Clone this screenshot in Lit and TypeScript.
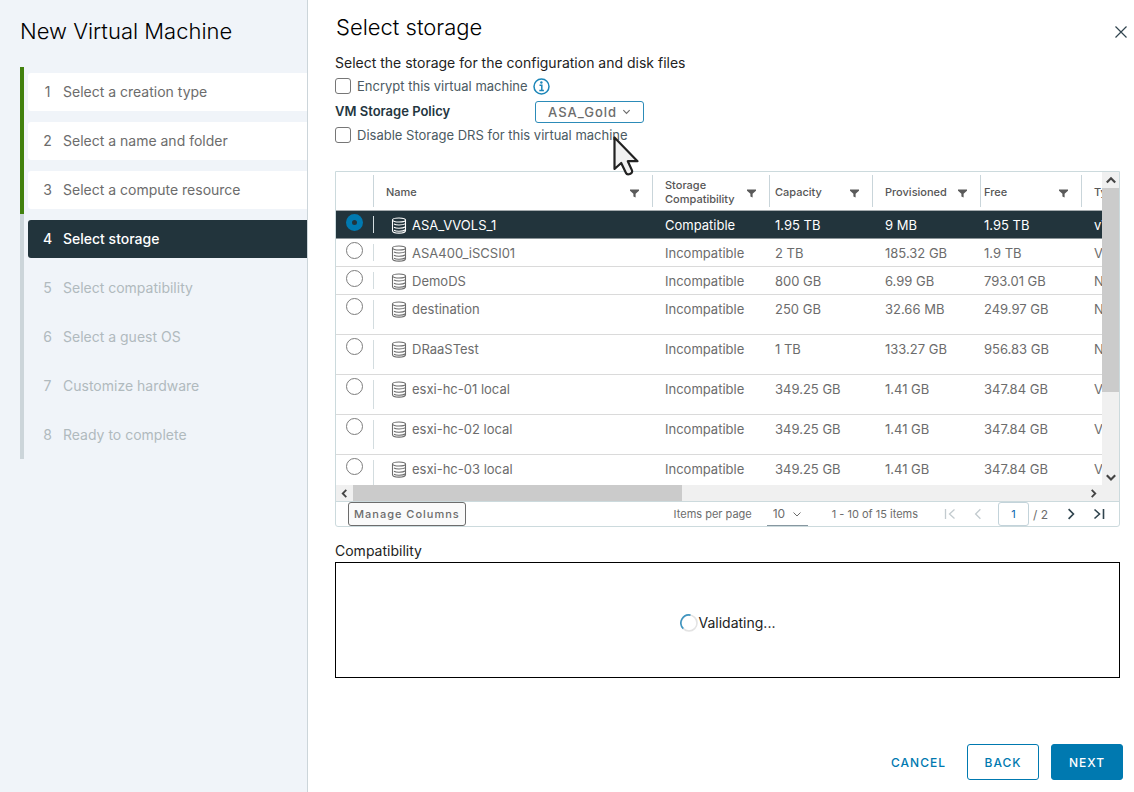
import { LitElement, html, svg, css, nothing } from "lit";
import { customElement, property, state } from "lit/decorators.js";
import { classMap } from "lit/directives/class-map.js";

interface Datastore {
  name: string;
  compat: string;
  capacity: string;
  provisioned: string;
  free: string;
  type: string;
  tall?: boolean;
}

const STEPS = [
  "Select a creation type",
  "Select a name and folder",
  "Select a compute resource",
  "Select storage",
  "Select compatibility",
  "Select a guest OS",
  "Customize hardware",
  "Ready to complete",
];

const STORES: Datastore[] = [
  { name: "ASA_VVOLS_1", compat: "Compatible", capacity: "1.95 TB", provisioned: "9 MB", free: "1.95 TB", type: "vVol" },
  { name: "ASA400_iSCSI01", compat: "Incompatible", capacity: "2 TB", provisioned: "185.32 GB", free: "1.9 TB", type: "VMFS 6" },
  { name: "DemoDS", compat: "Incompatible", capacity: "800 GB", provisioned: "6.99 GB", free: "793.01 GB", type: "NFS 3" },
  { name: "destination", compat: "Incompatible", capacity: "250 GB", provisioned: "32.66 MB", free: "249.97 GB", type: "NFS 3", tall: true },
  { name: "DRaaSTest", compat: "Incompatible", capacity: "1 TB", provisioned: "133.27 GB", free: "956.83 GB", type: "NFS 3", tall: true },
  { name: "esxi-hc-01 local", compat: "Incompatible", capacity: "349.25 GB", provisioned: "1.41 GB", free: "347.84 GB", type: "VMFS 6", tall: true },
  { name: "esxi-hc-02 local", compat: "Incompatible", capacity: "349.25 GB", provisioned: "1.41 GB", free: "347.84 GB", type: "VMFS 6", tall: true },
  { name: "esxi-hc-03 local", compat: "Incompatible", capacity: "349.25 GB", provisioned: "1.41 GB", free: "347.84 GB", type: "VMFS 6", tall: true },
];

const chevron = (d: string, size = 10, width = 1.5) => html`
  <svg width=${size} height=${size} viewBox="0 0 10 10" fill="none" stroke="currentColor" stroke-width=${width} aria-hidden="true">
    ${svg`<path d=${d}></path>`}
  </svg>`;

const UP = "M1.5 7 5 3.5 8.5 7";
const DOWN = "M1.5 3.5 5 7 8.5 3.5";
const LEFT = "M7 1 3 5 7 9";
const RIGHT = "M3 1 7 5 3 9";

@customElement("wizard-steps")
export class WizardSteps extends LitElement {
  @property({ type: Number }) current = 4;

  static styles = css`
    :host { display: block; }
    .steps { list-style: none; margin: 0; padding: 0; }
    .step { border-left: 4px solid #ccd5da; padding: 6px 0 5px 4px; }
    .done { border-left-color: #42810e; }
    .link {
      display: flex; align-items: center; gap: 10px; height: 38px; padding-left: 14px;
      border-radius: 3px 0 0 3px; color: #b0babe; text-decoration: none;
      font-size: 14px; line-height: 20px;
    }
    .done .link { background: #fff; color: #6c6c6c; }
    .active .link { background: #22343c; color: #fff; font-weight: 500; }
    .num { width: 11px; text-align: center; }
  `;

  render() {
    return html`<ol class="steps">
      ${STEPS.map((label, i) => {
        const n = i + 1;
        return html`<li class=${classMap({ step: true, done: n < this.current, active: n === this.current })}>
          <a class="link" href="#step-${n}" aria-current=${n === this.current ? "step" : nothing}>
            <span class="num">${n}</span><span>${label}</span>
          </a>
        </li>`;
      })}
    </ol>`;
  }
}

@customElement("datastore-grid")
export class DatastoreGrid extends LitElement {
  @state() private selected = 0;

  static styles = css`
    :host { display: block; border: 1px solid #ccdadd; border-radius: 0 0 3px 3px; }
    .scroller { display: grid; grid-template-columns: minmax(0, 1fr) 17px; grid-template-rows: 313px 16px; }
    .view { overflow: hidden; }
    .table { border-collapse: separate; border-spacing: 0; table-layout: fixed; width: 1600px; font-size: 13px; line-height: 18px; color: #6c6c6c; }
    .c-radio { width: 38px; }
    .c-name { width: 279px; }
    .c-compat { width: 117px; }
    .c-cap { width: 103px; }
    .c-prov { width: 108px; }
    .c-free { width: 101px; }
    th, td { box-sizing: border-box; padding: 0 12px; text-align: left; white-space: nowrap; overflow: hidden; }
    th {
      height: 39px; border-bottom: 1px solid #a5abae; font-size: 11px; line-height: 14px; font-weight: 500; color: #565656;
      padding-right: 14px; padding-top: 1px;
      background: linear-gradient(#c9d5da, #c9d5da) right center / 1px 32px no-repeat;
    }
    .head { display: flex; align-items: center; justify-content: space-between; white-space: normal; }
    .head svg { flex: none; margin-top: 3px; }
    .near { padding-left: 5px; }
    .edge { padding-left: 3px; }
    td { height: 28px; padding-top: 5px; border-bottom: 1px solid #dadada; vertical-align: top; }
    .tall td { height: 40px; }
    .pick {
      padding: 3px 0 0 10px;
      background: linear-gradient(#d3dcdf, #d3dcdf) right center / 1px calc(100% - 10px) no-repeat;
    }
    .on td { background-color: #22343c; border-bottom-color: #8b9498; color: #fff; }
    .radio {
      appearance: none; display: block; box-sizing: border-box; width: 17px; height: 17px; margin: 0;
      border: 1px solid #7d7d7d; border-radius: 50%; background: #fff;
    }
    .radio:checked { border: 6px solid #0079b0; background: #22343c; }
    .name { display: flex; align-items: center; gap: 5px; padding-left: 5px; }
    .corner, .vbar, .hbar { background: #f0f0f0; color: #444; }
    .vbar { grid-row: 1; grid-column: 2; display: grid; grid-template-rows: 16px 1fr 17px; }
    .hbar { display: grid; grid-template-columns: 17px 1fr 17px; }
    .arrow { display: grid; place-items: center; }
    .vthumb { height: 73%; background: #cbcbcb; }
    .hthumb { width: 45%; background: #cbcbcb; }
    .foot {
      display: flex; align-items: center; height: 24px; border-top: 1px solid #ccdadd;
      padding: 0 12px; font-size: 11px; color: #6c6c6c;
    }
    button, input, select { font-family: inherit; color: inherit; }
    .manage {
      height: 24px; padding: 0 5px; border: 1px solid #6c6c6c; border-radius: 3px; background: #fafafa;
      font-size: 11px; font-weight: 500; letter-spacing: 1px; margin-right: auto; white-space: nowrap;
    }
    .size { display: grid; align-items: center; width: 41px; margin: 0 24px 0 15px; border-bottom: 1px solid #8797a0; }
    .size select, .size svg { grid-area: 1 / 1; }
    .size svg { justify-self: end; margin-right: 6px; pointer-events: none; }
    .size select { appearance: none; border: 0; background: none; height: 23px; padding: 0 6px; font-size: 12px; }
    .nav { display: grid; place-items: center; width: 28px; height: 22px; padding: 0; border: 0; background: none; color: #30444e; }
    .nav:disabled { color: #c3cbcf; }
    .range { margin-right: 18px; }
    .page {
      box-sizing: border-box; width: 31px; height: 24px; margin: 0 4px 0 6px; border: 1px solid #c3d3da; border-radius: 3px;
      text-align: center; font-size: 11px; color: #0b65ad;
    }
    .total { width: 24px; white-space: pre; font-size: 12px; }
    .last { margin-right: -6px; }
  `;

  private filter() {
    return html`<svg width="9" height="9" viewBox="0 0 9 9" aria-hidden="true">
      <path d="M0 .5h9v1.300L5.600 4.800v3.700L3.400 7.500V4.800L0 1.800z" fill="#5a5a5a"></path></svg>`;
  }

  private disk() {
    return html`<svg width="16" height="17" viewBox="0 0 16 17" fill="none" stroke="currentColor" stroke-width="1.1" aria-hidden="true">
      <ellipse cx="8" cy="3" rx="6.5" ry="2"></ellipse>
      <path d="M1.500 3v10.800c0 1.200 2.900 2.300 6.500 2.300s6.500-1.100 6.500-2.300V3M3 7c1 .7 3 1 5 1 2.700 0 5.200-.5 6.500-1.400M3 10.200c1 .7 3 1 5 1 2.700 0 5.200-.5 6.500-1.400M3 13.200c1 .7 3 1 5 1 2.700 0 5.200-.5 6.500-1.400"></path></svg>`;
  }

  render() {
    const head = (label: string, cls = "") =>
      html`<th scope="col" class=${cls}><div class="head"><span>${label}</span>${this.filter()}</div></th>`;
    return html`
      <div class="scroller">
        <div class="view">
          <table class="table">
            <colgroup>
              <col class="c-radio"><col class="c-name"><col class="c-compat"><col class="c-cap"><col class="c-prov"><col class="c-free"><col>
            </colgroup>
            <thead>
              <tr>
                <th scope="col" aria-label="Selection"></th>
                ${head("Name")} ${head("Storage Compatibility")} ${head("Capacity", "near")}
                ${head("Provisioned")} ${head("Free", "edge")} ${head("Type")}
              </tr>
            </thead>
            <tbody>
              ${STORES.map((s, i) => html`
                <tr class=${classMap({ tall: !!s.tall, on: i === this.selected })}>
                  <td class="pick"><input class="radio" type="radio" name="store" aria-label=${s.name}
                    .checked=${i === this.selected} @change=${() => (this.selected = i)}></td>
                  <td><div class="name">${this.disk()}<span>${s.name}</span></div></td>
                  <td>${s.compat}</td>
                  <td class="near">${s.capacity}</td>
                  <td>${s.provisioned}</td>
                  <td class="edge">${s.free}</td>
                  <td>${s.type}</td>
                </tr>`)}
            </tbody>
          </table>
        </div>
        <div class="vbar">
          <div class="arrow">${chevron(UP, 12, 1.8)}</div>
          <div><div class="vthumb"></div></div>
          <div class="arrow">${chevron(DOWN, 12, 1.8)}</div>
        </div>
        <div class="hbar">
          <div class="arrow">${chevron(LEFT, 9, 2)}</div>
          <div class="hthumb"></div>
          <div class="arrow">${chevron(RIGHT, 9, 2)}</div>
        </div>
        <div class="corner"></div>
      </div>
      <div class="foot">
        <button class="manage">Manage Columns</button>
        <label for="size">Items per page</label>
        <span class="size">
          <select id="size"><option>10</option><option>20</option></select>
          ${chevron(DOWN, 10, 1)}
        </span>
        <span class="range">1 - 10 of 15 items</span>
        <button class="nav" disabled aria-label="First page">
          <svg width="12" height="12" viewBox="0 0 12 12" fill="none" stroke="currentColor" stroke-width="1.3"><path d="M1.500 1v10M10.500 1.500 5.500 6l5 4.500"></path></svg>
        </button>
        <button class="nav" disabled aria-label="Previous page">${chevron(LEFT, 12, 1.1)}</button>
        <input class="page" aria-label="Current page" value="1">
        <span class="total">/ 2</span>
        <button class="nav" aria-label="Next page">${chevron(RIGHT, 12, 1.4)}</button>
        <button class="nav last" aria-label="Last page">
          <svg width="12" height="12" viewBox="0 0 12 12" fill="none" stroke="currentColor" stroke-width="1.600"><path d="M10.500 1v10M1.500 1.500 6.500 6l-5 4.500"></path></svg>
        </button>
      </div>`;
  }
}

@customElement("app-root")
export class AppRoot extends LitElement {
  static styles = css`
    :host {
      display: grid; grid-template-columns: 308px minmax(0, 1fr); min-height: 100vh; position: relative;
      font-family: Inter, "Noto Sans", sans-serif; background: #fff; color: #222;
    }
    .side { box-sizing: border-box; background: #f0f4f9; border-right: 1px solid #ccd5da; padding: 17px 0 0 20px; }
    .title { margin: 0; font-size: 22px; line-height: 28px; font-weight: 300; color: #000; }
    .side .title { margin-bottom: 22px; }
    .main { display: flex; flex-direction: column; }
    .top { display: flex; justify-content: space-between; padding: 13px 6px 0 28px; }
    .close { display: grid; place-items: center; width: 14px; height: 14px; padding: 0; margin-top: 12px; border: 0; background: none; color: #30444e; }
    .body { padding: 9px 14px 0 27px; }
    .intro { margin: 0; font-size: 14px; line-height: 25px; }
    .form { display: grid; grid-template-columns: 200px 1fr; align-items: center; font-size: 13px; line-height: 22px; color: #4b5a62; margin-bottom: 25px; }
    .check { grid-column: 1 / -1; display: flex; align-items: center; height: 22px; }
    .box { appearance: none; box-sizing: border-box; width: 16px; height: 16px; margin: 0 6px 0 0; border: 1px solid #767676; border-radius: 3px; background: #fff; }
    .info { margin-left: 5px; }
    .label { font-weight: 600; color: #24363f; line-height: 25px; padding-top: 2px; }
    .policy { display: grid; align-items: center; justify-self: start; width: 109px; padding-top: 2px; }
    .policy select, .policy svg { grid-area: 1 / 1; }
    .policy svg { justify-self: end; margin-right: 13px; pointer-events: none; color: #6c6c6c; }
    .policy select {
      appearance: none; box-sizing: border-box; width: 109px; height: 22px; padding: 0 12px; border: 1px solid #2c8bb8; border-radius: 3px;
      background: #fff; color: #6c6c6c; font-family: inherit; font-size: 13px; font-weight: 500; letter-spacing: 1px;
    }
    .sub { margin: 14px 0 1px; font-size: 14px; line-height: 20px; font-weight: 400; }
    .result { display: flex; align-items: center; justify-content: center; gap: 1px; box-sizing: border-box; height: 116px; padding-top: 5px; border: 1px solid #000; font-size: 14px; }
    .actions { display: flex; justify-content: flex-end; gap: 12px; margin-top: auto; padding: 12px 11px; }
    .btn {
      box-sizing: border-box; min-width: 72px; height: 36px; padding: 0 8px; border: 1px solid transparent; border-radius: 3px;
      background: none; color: #0079b0; font-family: inherit; font-size: 12px; font-weight: 500; letter-spacing: 1px;
    }
    .outline { border-color: #0079b0; }
    .primary { background: #0079b0; border-color: #0079b0; color: #fff; }
    .cursor { position: absolute; left: 612px; top: 134px; pointer-events: none; }
  `;

  render() {
    return html`
      <aside class="side">
        <h1 class="title">New Virtual Machine</h1>
        <wizard-steps .current=${4}></wizard-steps>
      </aside>
      <main class="main">
        <header class="top">
          <h2 class="title">Select storage</h2>
          <button class="close" aria-label="Close">
            <svg width="14" height="14" viewBox="0 0 14 14" stroke="currentColor" stroke-width="1.2"><path d="M1.500 1.500l11 11M12.500 1.500l-11 11"></path></svg>
          </button>
        </header>
        <div class="body">
          <p class="intro">Select the storage for the configuration and disk files</p>
          <div class="form">
            <div class="check">
              <input class="box" type="checkbox" id="encrypt"><label for="encrypt">Encrypt this virtual machine</label>
              <svg class="info" width="17" height="17" viewBox="0 0 17 17" fill="none" stroke="#1c86b8" aria-hidden="true">
                <circle cx="8.500" cy="8.500" r="7.500" stroke-width="1.500"></circle>
                <path d="M6.500 7.200h2.300v5M6.300 12.500h4.600" stroke-width="1.500"></path>
                <circle cx="8.400" cy="4.500" r="1.200" fill="#1c86b8" stroke="none"></circle>
              </svg>
            </div>
            <label class="label" for="policy">VM Storage Policy</label>
            <span class="policy">
              <select id="policy"><option>ASA_Gold</option></select>
              ${chevron(DOWN, 9, 1.3)}
            </span>
            <div class="check">
              <input class="box" type="checkbox" id="drs"><label for="drs">Disable Storage DRS for this virtual machine</label>
            </div>
          </div>
          <datastore-grid></datastore-grid>
          <h3 class="sub">Compatibility</h3>
          <div class="result" role="status">
            <svg width="18" height="18" viewBox="0 0 18 18" fill="none" aria-hidden="true">
              <circle cx="9" cy="9" r="8" stroke="#e3e3e3" stroke-width="1.600"></circle>
              <path d="M3.300 14.600A8 8 0 0 1 10.500 1.100" stroke="#3f95c0" stroke-width="1.600"></path>
            </svg>
            <span>Validating...</span>
          </div>
        </div>
        <footer class="actions">
          <button class="btn">CANCEL</button>
          <button class="btn outline">BACK</button>
          <button class="btn primary">NEXT</button>
        </footer>
      </main>
      <svg class="cursor" width="30" height="44" viewBox="0 0 30 44" aria-hidden="true">
        <path d="M2.500 3.500V35l6.700-6 4.800 10c1.200 2.800 7.300.8 6-2.600L15.800 27.200h9.700z" fill="#f1f1f1" stroke="#222" stroke-width="2.200" stroke-linejoin="round"></path>
      </svg>`;
  }
}
